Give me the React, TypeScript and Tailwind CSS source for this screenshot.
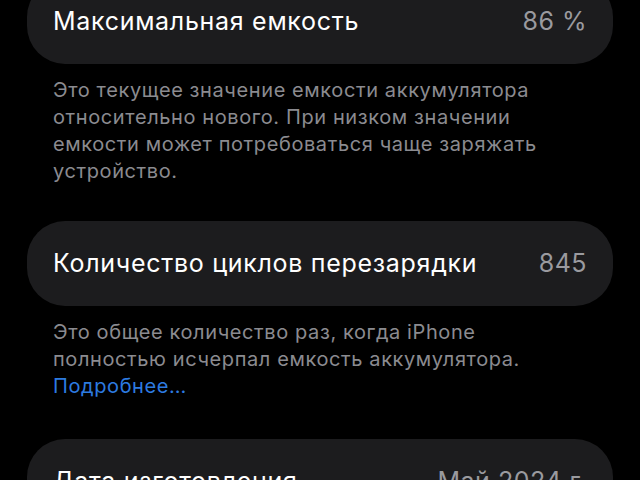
import React from "react"

// One row of the battery health list
interface StatRow {
  label: string;
  value: string;
  note?: string[];
  link?: string;
}

const rows: StatRow[] = [
  {
    label: "Максимальная емкость",
    value: "86 %",
    note: [
      "Это текущее значение емкости аккумулятора",
      "относительно нового. При низком значении",
      "емкости может потребоваться чаще заряжать",
      "устройство.",
    ],
  },
  {
    label: "Количество циклов перезарядки",
    value: "845",
    note: [
      "Это общее количество раз, когда iPhone",
      "полностью исчерпал емкость аккумулятора.",
    ],
    link: "Подробнее…",
  },
  {
    label: "Дата изготовления",
    value: "Май 2024 г.",
  },
]

function Card({ label, value }: { label: string; value: string }) {
  return (
    <div className="h-[85px] rounded-[38px] bg-[#1c1c1e] px-[26px] flex items-center justify-between">
      <span className="text-[25px] text-white tracking-[0.7px]">{label}</span>
      <span className="text-[25px] text-[#9a9a9f] tracking-[0.5px]">{value}</span>
    </div>
  )
}

export default function App() {
  return (
    <div
      className="w-[640px] h-[480px] overflow-hidden bg-black"
      style={{ fontFamily: "Inter, 'Noto Sans', sans-serif" }}
    >
      <div className="px-[27px] -mt-[21px] flex flex-col">
        {rows.map((row, i) => (
          <div key={i} className="flex flex-col">
            <Card label={row.label} value={row.value} />
            {row.note && (
              <div
                className={
                  row.link
                    ? "px-[26px] pt-[13px] pb-[39px] text-[20px] leading-[27px] tracking-[0.6px] text-[#8b8b90]"
                    : "px-[26px] pt-[13px] pb-[36px] text-[20px] leading-[27px] tracking-[0.6px] text-[#8b8b90]"
                }
              >
                {row.note.map((line, j) => (
                  <div key={j}>{line}</div>
                ))}
                {row.link && <div className="text-[#2d7be0]">{row.link}</div>}
              </div>
            )}
          </div>
        ))}
      </div>
    </div>
  )
}
